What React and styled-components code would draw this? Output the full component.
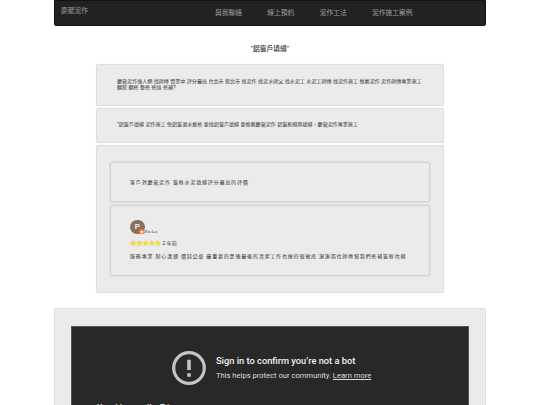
import React from "react";
import styled, { createGlobalStyle } from "styled-components";

const links = ["與我聯絡", "線上預約", "泥作工法", "泥作施工案例"];

function App() {
  return (
    <>
      <GlobalStyle />
      <Page>
        <Navbar>
          <Brand>慶龍泥作</Brand>
          <Menu>
            {links.map((link) => {
              return <li key={link}>{link}</li>;
            })}
          </Menu>
        </Navbar>
        <Title>"鋁窗戶填縫"</Title>
        <Column>
          <Well $height={42} $top={13}>
            <Text>
              慶龍泥作達人網 找師傅 營業中 評分最高 台北市 新北市 找泥作 找泥水師父 找水泥工 水泥工師傅 找泥作施工 推薦泥作 泥作師傅專業施工
              <br />
              翻新 翻修 整修 修繕 修補?
            </Text>
          </Well>
          <Well $height={35} $top={12}>
            <Text>"鋁窗戶填縫 泥作施工 免鋁窗漏水維修 要找鋁窗戶填縫 要推薦慶龍泥作 鋁窗框縫隙填縫。慶龍泥作專業施工</Text>
          </Well>
          <Reviews>
            <ReviewCard $height={40} $top={16}>
              <ReviewText>客戶對慶龍泥作 窗框水泥填縫評分最高的評價</ReviewText>
            </ReviewCard>
            <ReviewCard $height={71} $top={13}>
              <Author>
                <Avatar>
                  P
                  <Badge viewBox="0 0 12 12">
                    <circle cx="6" cy="6" r="6" fill="#f0752c" />
                    <path d="M6 1.5 7.4 4.6 10.7 5 8.2 7.2 8.9 10.5 6 8.8 3.1 10.5 3.8 7.2 1.3 5 4.6 4.6Z" fill="#ffe3c8" />
                  </Badge>
                </Avatar>
                <Name>Pin Lee</Name>
              </Author>
              <Rating>
                <Stars viewBox="0 0 60 12">
                  {[0, 12, 24, 36, 48].map((x) => (
                    <path
                      key={x}
                      transform={`translate(${x} 0)`}
                      d="M6 0.3 7.7 4 11.7 4.4 8.7 7.1 9.6 11.4 6 9.2 2.4 11.4 3.3 7.1 0.3 4.4 4.3 4Z"
                    />
                  ))}
                </Stars>
                2 年前
              </Rating>
              <ReviewText>服務專業 耐心溝通 價錢公道 最重要的是連最後的清潔工作也做的很徹底 謝謝兩位師傅幫我們修補窗框坎縫</ReviewText>
            </ReviewCard>
          </Reviews>
        </Column>
        <VideoPanel>
          <Video>
            <Notice>
              <AlertIcon viewBox="0 0 34 34">
                <circle cx="17" cy="17" r="15.3" />
                <path d="M15.2 8.7h3.6v10.2h-3.6zM15.2 22.2h3.6v3.6h-3.6z" />
              </AlertIcon>
              <div>
                <h2>Sign in to confirm you’re not a bot</h2>
                <p>
                  This helps protect our community. <a>Learn more</a>
                </p>
              </div>
            </Notice>
            <Caption>Upset tummy the Tri</Caption>
          </Video>
        </VideoPanel>
      </Page>
    </>
  );
}

const GlobalStyle = createGlobalStyle`
  * {
    box-sizing: border-box;
  }

  html, body {
    margin: 0;
    overflow: hidden;
    background: white;
  }

  body {
    font-family: "Liberation Sans", "Noto Sans CJK TC", sans-serif;
    color: #333;
  }

  h1, h2, p, ul {
    margin: 0;
    padding: 0;
  }
`;

const Page = styled.div`
  width: 432px;
  height: 405px;
  margin-left: 54px;
  overflow: hidden;
`;

const Navbar = styled.nav`
  display: flex;
  height: 26px;
  border: 1px solid #121212;
  border-radius: 0 0 2px 2px;
  background: #222;
  color: #9d9d9d;
  font-size: 6.75px;
  line-height: 10px;
`;

const Brand = styled.div`
  width: 160px;
  padding: 5px 0 0 6px;
`;

const Menu = styled.ul`
  display: flex;
  gap: 25.3px;
  padding-top: 7px;
  list-style: none;
`;

const Title = styled.h1`
  margin-top: 18px;
  font-size: 6.75px;
  font-weight: 500;
  line-height: 10px;
  text-align: center;
`;

const Column = styled.main`
  display: flex;
  flex-direction: column;
  gap: 2px;
  width: 348px;
  margin: 10px 0 0 42px;
`;

const Panel = styled.section`
  border: 1px solid #dfdfdf;
  border-radius: 2px;
  background: #ebebeb;
  box-shadow: 0 0 1px rgba(0, 0, 0, 0.12);
`;

const Well = styled(Panel)`
  height: ${(props) => props.$height}px;
  padding: ${(props) => props.$top}px 20px 0;
`;

const Text = styled.p`
  font-size: 5.05px;
  line-height: 6px;
  white-space: nowrap;
`;

const Reviews = styled(Panel)`
  display: flex;
  flex-direction: column;
  gap: 3px;
  height: 148px;
  padding: 16px 13px 0;
`;

const ReviewCard = styled.div`
  height: ${(props) => props.$height}px;
  padding: ${(props) => props.$top}px 19px 0;
  border: 1px solid #d3d3d3;
  border-radius: 1px;
  box-shadow: 0 0 2px rgba(0, 0, 0, 0.14);
`;

const ReviewText = styled.p`
  font-size: 5.06px;
  line-height: 7px;
  letter-spacing: 0.77px;
  white-space: nowrap;
`;

const Author = styled.div`
  display: flex;
  align-items: flex-end;
  height: 15px;
`;

const Avatar = styled.div`
  position: relative;
  width: 14.5px;
  height: 14.5px;
  border-radius: 50%;
  background: #8d6e63;
  color: white;
  font: 500 8px/14.5px Roboto, sans-serif;
  text-align: center;
`;

const Badge = styled.svg`
  position: absolute;
  right: 0;
  bottom: 0;
  width: 5.5px;
  height: 5.5px;
`;

const Name = styled.span`
  font: 4.4px/4px "Liberation Serif", serif;
`;

const Rating = styled.div`
  display: flex;
  align-items: center;
  gap: 1.5px;
  height: 7px;
  margin: 6px 0;
  font-size: 5.06px;
  line-height: 7px;
`;

const Stars = styled.svg`
  width: 31px;
  height: 6.2px;
  fill: #f7df3e;
  stroke: #e9bd2e;
  stroke-width: 0.5;
`;

const VideoPanel = styled(Panel)`
  height: 120px;
  margin-top: 15px;
  padding: 17px 16px 0;
`;

const Video = styled.div`
  height: 103px;
  border: 1px solid #555;
  background: #282828;
  color: #f1f1f1;
  font-family: Roboto, sans-serif;
`;

const Notice = styled.div`
  display: flex;
  gap: 10px;
  padding: 24px 0 0 100px;
  white-space: nowrap;

  h2 {
    margin-top: 4px;
    font-size: 9.28px;
    font-weight: 500;
    line-height: 12px;
  }

  p {
    margin-top: 4px;
    font-size: 7.6px;
    line-height: 10px;
    color: #ddd;
  }

  a {
    text-decoration: underline;
  }
`;

const AlertIcon = styled.svg`
  width: 34px;
  height: 34px;
  fill: #c4c4c4;

  circle {
    fill: none;
    stroke: #c4c4c4;
    stroke-width: 3.2;
  }
`;

const Caption = styled.p`
  padding: 17px 0 0 25px;
  font-size: 8px;
  font-weight: 500;
  line-height: 10px;
`;

export default App;
